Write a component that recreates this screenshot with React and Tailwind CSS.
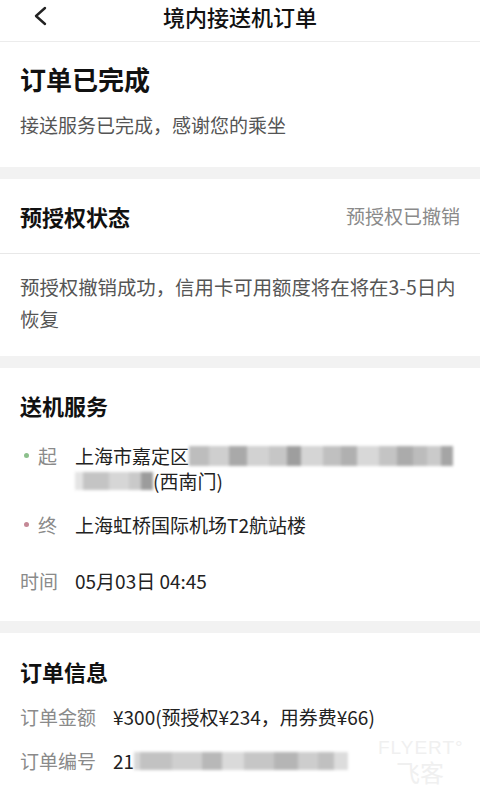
import React from "react";

const F = { fontFamily: '"Noto Sans CJK SC", "Noto Sans", sans-serif' };

function Mosaic({ cells, h = 22 }) {
  return (
    <span className="inline-flex align-middle blur-[1.5px]" style={{ height: h }}>
      {cells.map(([w, c], i) => (
        <span key={i} style={{ width: w, background: c, height: h }} className="inline-block" />
      ))}
    </span>
  );
}

export default function App() {
  return (
    <div className="w-[480px] h-[800px] overflow-hidden bg-[#f2f2f2] relative" style={F}>
      {/* header */}
      <div className="h-[42px] bg-white border-b border-[#ececec] relative flex items-center justify-center pb-[10px]">
        <svg className="absolute left-[32px] top-[6px]" width="16" height="20" viewBox="0 0 16 20" fill="none">
          <path d="M13 2 L4 10 L13 18" stroke="#222" strokeWidth="2.4" strokeLinecap="round" strokeLinejoin="round" />
        </svg>
        <div className="text-[22px] leading-[30px] font-medium text-[#111]">境内接送机订单</div>
      </div>

      {/* status */}
      <div className="bg-white h-[125px] px-[20px] pt-[22px]">
        <div className="text-[26px] leading-[30px] font-bold text-[#111]">订单已完成</div>
        <div className="mt-[18px] text-[19px] leading-[26px] text-[#555]">接送服务已完成，感谢您的乘坐</div>
      </div>

      <div className="h-[12px]" />

      {/* pre-auth */}
      <div className="bg-white">
        <div className="h-[75px] px-[20px] flex items-center justify-between border-b border-[#e8e8e8]">
          <div className="text-[22px] font-bold text-[#111]">预授权状态</div>
          <div className="text-[19px] text-[#8a8a8a]">预授权已撤销</div>
        </div>
        <div className="px-[20px] pt-[17px] pb-[21px] text-[19.4px] leading-[32px] text-[#555]">
          <div className="whitespace-nowrap">预授权撤销成功，信用卡可用额度将在将在3-5日内</div>
          <div>恢复</div>
        </div>
      </div>

      <div className="h-[12px]" />

      {/* drop-off service */}
      <div className="bg-white h-[253px] px-[20px] pt-[22px]">
        <div className="text-[22px] leading-[30px] font-bold text-[#111]">送机服务</div>

        <div className="mt-[23px] flex">
          <div className="w-[55px] flex items-start shrink-0">
            <span className="w-[5px] h-[5px] rounded-full bg-[#8cc08c] mt-[10px] ml-[4px]" />
            <span className="ml-[9px] text-[19px] leading-[25px] text-[#8a8a8a]">起</span>
          </div>
          <div className="text-[19px] leading-[25px] text-[#222]">
            <div className="whitespace-nowrap flex items-center">
              <span>上海市嘉定区</span>
              <Mosaic
                h={20}
                cells={[
                  [20, "#bdbdbd"], [20, "#cfcfcf"], [18, "#a9a9a9"], [22, "#d2d2d2"], [18, "#c6c6c6"],
                  [14, "#9e9e9e"], [22, "#d5d5d5"], [18, "#c0c0c0"], [16, "#b0b0b0"], [22, "#d8d8d8"],
                  [18, "#c4c4c4"], [16, "#ababab"], [14, "#bcbcbc"], [14, "#cacaca"], [12, "#a5a5a5"],
                ]}
              />
            </div>
            <div className="whitespace-nowrap flex items-center">
              <Mosaic h={18} cells={[[8, "#e4e4e4"], [26, "#c4c4c4"], [20, "#d6d6d6"], [12, "#c9c9c9"], [12, "#9c9c9c"]]} />
              <span>(西南门)</span>
            </div>
          </div>
        </div>

        <div className="mt-[19px] flex">
          <div className="w-[55px] flex items-start shrink-0">
            <span className="w-[5px] h-[5px] rounded-full bg-[#c48896] mt-[10px] ml-[4px]" />
            <span className="ml-[9px] text-[19px] leading-[25px] text-[#8a8a8a]">终</span>
          </div>
          <div className="text-[19px] leading-[25px] text-[#222]">上海虹桥国际机场T2航站楼</div>
        </div>

        <div className="mt-[31px] flex text-[19px] leading-[25px]">
          <div className="w-[55px] shrink-0 text-[#8a8a8a]">时间</div>
          <div className="text-[#222]">05月03日 04:45</div>
        </div>
      </div>

      <div className="h-[12px]" />

      {/* order info */}
      <div className="bg-white h-[200px] px-[20px] pt-[23px]">
        <div className="text-[22px] leading-[30px] font-bold text-[#111]">订单信息</div>
        <div className="mt-[18px] flex text-[19px] leading-[26px]">
          <div className="w-[93px] shrink-0 text-[#8a8a8a]">订单金额</div>
          <div className="text-[#222]">¥300(预授权¥234，用券费¥66)</div>
        </div>
        <div className="mt-[18px] flex items-center text-[19px] leading-[26px]">
          <div className="w-[93px] shrink-0 text-[#8a8a8a]">订单编号</div>
          <div className="text-[#222] flex items-center whitespace-nowrap">
            <span>21</span>
            <Mosaic
              h={18}
              cells={[
                [6, "#d8d8d8"], [32, "#c2c2c2"], [30, "#cfcfcf"], [20, "#b8b8b8"], [22, "#dadada"],
                [30, "#c6c6c6"], [24, "#b5b5b5"], [20, "#cdcdcd"], [16, "#c0c0c0"], [14, "#dcdcdc"],
              ]}
            />
          </div>
        </div>
      </div>

      {/* watermark */}
      <div className="absolute left-[378px] top-[738px] text-[#f0f0f0] leading-none select-none" style={{ fontFamily: '"Liberation Sans", sans-serif' }}>
        <div className="text-[19px] tracking-[1px]">FLYERT°</div>
        <div className="text-[24px] mt-[3px] pl-[18px]" style={F}>飞客</div>
      </div>
    </div>
  );
}
